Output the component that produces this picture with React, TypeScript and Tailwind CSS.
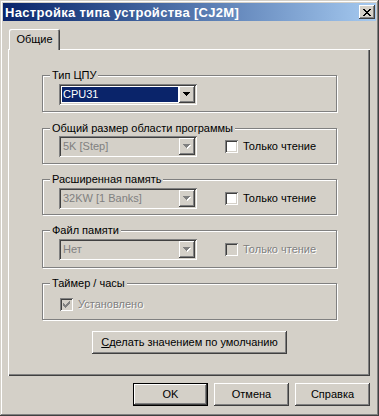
import type { FC, ReactNode } from 'react'

const RAISED =
  'shadow-[inset_-1px_-1px_0_#404040,inset_1px_1px_0_#ffffff,inset_-2px_-2px_0_#808080,inset_2px_2px_0_#d4d0c8]'
const SUNKEN =
  'shadow-[inset_1px_1px_0_#808080,inset_-1px_-1px_0_#ffffff,inset_2px_2px_0_#404040,inset_-2px_-2px_0_#d4d0c8]'

const Arrow: FC<{ disabled?: boolean }> = ({ disabled }) => (
  <svg width="8" height="5" viewBox="0 0 8 5" shapeRendering="crispEdges">
    {disabled && (
      <path d="M1 1h7v1H1zM2 2h5v1H2zM3 3h3v1H3zM4 4h1v1H4z" fill="#ffffff" />
    )}
    <path
      d="M0 0h7v1H0zM1 1h5v1H1zM2 2h3v1H2zM3 3h1v1H3z"
      fill={disabled ? '#808080' : '#000000'}
    />
  </svg>
)

const Combo: FC<{ value: string; disabled?: boolean; selected?: boolean }> = ({
  value,
  disabled,
  selected,
}) => (
  <div
    className={`w-[138px] h-[21px] flex p-[2px] ${SUNKEN} ${disabled ? 'bg-[#d4d0c8]' : 'bg-white'}`}
  >
    <div className="flex-1 flex p-[1px]">
      <div
        className={`flex-1 flex items-center pl-[1px] leading-[13px] ${
          selected ? 'bg-[#0a246a] text-white' : ''
        } ${disabled ? 'text-[#808080]' : ''}`}
      >
        {value}
      </div>
    </div>
    <div className={`w-[16px] h-full flex items-center justify-center bg-[#d4d0c8] ${RAISED}`}>
      <Arrow disabled={disabled} />
    </div>
  </div>
)

const Check: FC<{ checked?: boolean; disabled?: boolean; label: string }> = ({
  checked,
  disabled,
  label,
}) => (
  <div className="flex items-center gap-[5px]">
    <div
      className={`w-[13px] h-[13px] flex items-center justify-center ${SUNKEN} ${
        disabled ? 'bg-[#d4d0c8]' : 'bg-white'
      }`}
    >
      {checked && (
        <svg width="7" height="7" viewBox="0 0 7 7" shapeRendering="crispEdges">
          <path
            d="M6 0h1v3H6zM5 1h1v3H5zM4 2h1v3H4zM3 3h1v3H3zM2 4h1v3H2zM1 3h1v3H1zM0 2h1v3H0z"
            fill={disabled ? '#808080' : '#000000'}
          />
        </svg>
      )}
    </div>
    <span
      className={`leading-[13px] ${
        disabled ? 'text-[#808080] [text-shadow:1px_1px_0_#ffffff]' : 'text-black'
      }`}
    >
      {label}
    </span>
  </div>
)

const Group: FC<{ title: string; className: string; children: ReactNode }> = ({
  title,
  className,
  children,
}) => (
  <fieldset
    className={`w-[295px] border border-[#808080] shadow-[inset_1px_1px_0_#ffffff,1px_1px_0_#ffffff] ${className}`}
  >
    <legend className="ml-[7px] px-[2px] leading-[13px] bg-[#d4d0c8]">{title}</legend>
    {children}
  </fieldset>
)

const Button: FC<{ children: ReactNode; isDefault?: boolean; className?: string }> = ({
  children,
  isDefault,
  className = '',
}) =>
  isDefault ? (
    <div className={`border border-black ${className}`}>
      <div className={`w-full h-full flex items-center justify-center ${RAISED}`}>{children}</div>
    </div>
  ) : (
    <div className={`flex items-center justify-center ${RAISED} ${className}`}>{children}</div>
  )

export default function App() {
  return (
    <div
      className="w-[379px] h-[416px] bg-[#d4d0c8] p-[3px] flex flex-col text-[11px] text-black font-['Liberation_Sans',Arial,sans-serif] shadow-[inset_-1px_-1px_0_#404040,inset_1px_1px_0_#d4d0c8,inset_-2px_-2px_0_#808080,inset_2px_2px_0_#ffffff]"
    >
      {/* title bar */}
      <div className="h-[18px] flex items-center justify-between pl-[2px] pr-[1px] bg-gradient-to-r from-[#0a246a] to-[#a6caf0]">
        <span className="text-white font-bold text-[13px] leading-[15px] tracking-[0.3px]">
          Настройка типа устройства [CJ2M]
        </span>
        <div className={`w-[16px] h-[14px] flex items-center justify-center bg-[#d4d0c8] ${RAISED}`}>
          <svg width="8" height="7" viewBox="0 0 8 7" shapeRendering="crispEdges">
            <path
              d="M0 0h2v1H0zM6 0h2v1H6zM1 1h2v1H1zM5 1h2v1H5zM2 2h4v1H2zM3 3h2v1H3zM2 4h4v1H2zM1 5h2v1H1zM5 5h2v1H5zM0 6h2v1H0zM6 6h2v1H6z"
              fill="#000000"
            />
          </svg>
        </div>
      </div>

      <div className="flex-1 flex flex-col pl-[5px] pt-[8px]">
        {/* tab strip */}
        <div className="flex h-[20px] pl-[1px]">
          <div className="relative z-10 w-[51px] h-[21px] flex items-center justify-center pb-[1px] bg-[#d4d0c8] rounded-t-[2px] shadow-[inset_1px_1px_0_#ffffff,inset_-1px_0_0_#404040,inset_-2px_0_0_#808080]">
            Общие
          </div>
        </div>

        {/* tab panel */}
        <div className="w-[362px] h-[327px] flex flex-col pl-[34px] pt-[20px] shadow-[inset_1px_1px_0_#ffffff,inset_-1px_-1px_0_#404040,inset_-2px_-2px_0_#808080]">
          <Group title="Тип ЦПУ" className="h-[43px]">
            <div className="pl-[16px] pt-[2px]">
              <Combo value="CPU31" selected />
            </div>
          </Group>

          <Group title="Общий размер области программы" className="h-[42px] mt-[10px]">
            <div className="pl-[16px] pt-[1px] flex items-center gap-[28px]">
              <Combo value="5K [Step]" disabled />
              <Check label="Только чтение" />
            </div>
          </Group>

          <Group title="Расширенная память" className="h-[42px] mt-[9px]">
            <div className="pl-[16px] pt-[2px] flex items-center gap-[28px]">
              <Combo value="32KW [1 Banks]" disabled />
              <Check label="Только чтение" />
            </div>
          </Group>

          <Group title="Файл памяти" className="h-[44px] mt-[9px]">
            <div className="pl-[16px] pt-[2px] flex items-center gap-[28px]">
              <Combo value="Нет" disabled />
              <Check label="Только чтение" disabled />
            </div>
          </Group>

          <Group title="Таймер / часы" className="h-[43px] mt-[9px]">
            <div className="pl-[17px] pt-[8px]">
              <Check label="Установлено" checked disabled />
            </div>
          </Group>

          <div className="w-[295px] flex justify-center mt-[11px]">
            <Button className="w-[195px] h-[23px]">
              <span>
                <span className="underline">С</span>делать значением по умолчанию
              </span>
            </Button>
          </div>
        </div>

        {/* dialog buttons */}
        <div className="w-[362px] flex justify-end gap-[6px] mt-[7px]">
          <Button isDefault className="w-[75px] h-[23px]">
            OK
          </Button>
          <Button className="w-[75px] h-[23px]">Отмена</Button>
          <Button className="w-[75px] h-[23px]">Справка</Button>
        </div>
      </div>
    </div>
  )
}
